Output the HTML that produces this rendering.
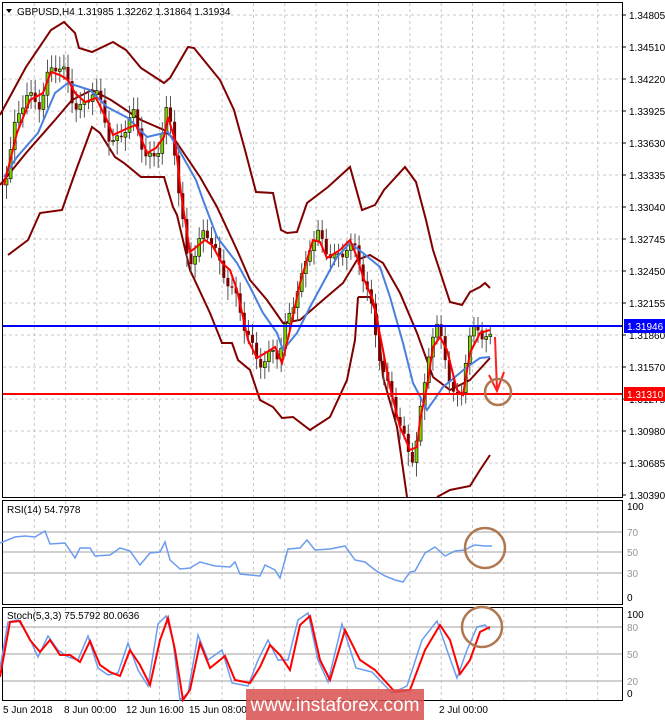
<!DOCTYPE html>
<html><head><meta charset="utf-8"><style>
html,body{margin:0;padding:0;background:#fff;}
body{width:665px;height:720px;overflow:hidden;position:relative;font-family:"Liberation Sans",sans-serif;}
svg{position:absolute;left:0;top:0}
</style></head><body>
<svg id="s" width="665" height="720" viewBox="0 0 665 720" xmlns="http://www.w3.org/2000/svg" font-family="Liberation Sans, sans-serif">
<rect width="665" height="720" fill="#fff"/>
<g id="grid" stroke="#c8c8c8" stroke-dasharray="3,3" stroke-width="1"></g>
<!-- frames -->
<rect x="2.5" y="2.5" width="620" height="495" fill="none" stroke="#000"/>
<rect x="2.5" y="500.5" width="620" height="104" fill="none" stroke="#000"/>
<rect x="2.5" y="607.5" width="620" height="93" fill="none" stroke="#000"/>
<!-- RSI / stoch levels -->
<g stroke="#c0c0c0" stroke-width="1.5">
<line x1="3" y1="532" x2="622" y2="532"/><line x1="3" y1="552" x2="622" y2="552"/><line x1="3" y1="573" x2="622" y2="573"/>
<line x1="3" y1="627" x2="622" y2="627"/><line x1="3" y1="654" x2="622" y2="654"/><line x1="3" y1="681" x2="622" y2="681"/>
</g>
<!-- Bollinger bands -->
<g fill="none" stroke="#800000" stroke-width="2">
<polyline points="0,115 26,67 51,30 64,22 75,33 79,48 92,52 113,42 126,50 141,68 164,83 170,78 188,47 194,48 220,80 234,110 245,150 256,192 273,193 281,230 287,233 297,232 307,203 328,187 350,167 362,210 375,205 384,190 405,167 416,182 426,220 433,250 450,302 462,305 470,292 480,287 485,283 490,288"/>
<polyline points="8,255 28,240 40,213 62,210 75,173 92,127 100,133 115,157 124,163 141,177 164,177 173,207 177,215 190,270 210,313 222,343 232,343 238,360 250,370 260,400 273,407 282,418 293,417 310,430 330,417 347,380 355,340 358,297"/>
<polyline points="358,297 370,297 377,315 383,377 397,427 407,497"/>
<polyline points="437,497 450,490 470,486 480,470 490,455"/>
<polyline points="0,185 26,153 55,120 72,100 92,90 111,100 141,120 164,130 175,140 200,177 217,207 237,250 250,280 267,300 283,323 300,320 323,300 343,283 357,260 370,255 383,263 400,293 417,333 433,377 450,390 470,380 490,358"/>
</g>
<g id="candles"></g>
<polyline fill="none" stroke="#4a7fe0" stroke-width="2" points="4,177 17,157 38,133 55,93 68,83 90,90 107,107 128,118 147,137 168,132 179,150 196,180 203,200 217,237 237,263 250,287 263,313 277,333 283,350 297,333 310,307 323,283 337,257 350,243 363,253 380,267 390,297 403,343 413,383 427,410 443,387 467,367 480,358 490,357"/>
<polyline id="ma" fill="none" stroke="#ff0000" stroke-width="2" points="4,185 17,133 30,100 43,93 51,72 60,75 68,80 75,93 85,102 96,98 107,120 113,135 128,128 136,125 147,153 156,148 164,137 168,117 175,140 181,193 190,252 205,240 212,245 222,263 230,270 237,290 243,317 248,340 257,358 267,352 275,347 282,363 290,330 300,283 313,240 320,242 327,258 340,250 350,240 357,257 363,277 373,300 383,350 390,387 400,427 410,450 417,447 420,420 427,387 433,347 440,337 447,350 457,390 463,395 470,353 480,333 490,330"/>
<!-- levels -->
<line x1="3" y1="326" x2="622" y2="326" stroke="#0000ff" stroke-width="2"/>
<line x1="3" y1="394" x2="622" y2="394" stroke="#ff0000" stroke-width="2"/>
<!-- annotations -->
<path d="M495,337 L497,390 M489,375 L497,391 L504,372" fill="none" stroke="#ff2020" stroke-width="2"/>
<circle cx="498" cy="392" r="13" fill="none" stroke="#b07850" stroke-width="2.5"/>
<!-- RSI -->
<polyline fill="none" stroke="#6a9cf0" stroke-width="1.5" points="0,543 15,537 25,536 35,537 45,531 50,544 65,543 75,558 80,548 90,548 95,556 110,555 120,548 130,551 140,565 150,553 160,552 165,542 170,560 180,569 190,568 200,562 215,566 230,567 235,562 240,574 260,576 265,565 275,570 280,578 288,549 300,548 307,540 315,550 330,549 345,546 355,560 365,562 375,570 385,576 395,580 403,582 410,572 415,571 425,553 435,547 445,556 455,551 465,550 470,547 475,545 485,546 492,546"/>
<circle cx="485" cy="548" r="20" fill="none" stroke="#b07850" stroke-width="2.5"/>
<!-- Stoch -->
<polyline fill="none" stroke="#6a9cf0" stroke-width="1.5" points="0,668 8,622 18,620 28,635 38,657 48,636 58,650 68,657 78,660 88,636 98,668 108,675 118,673 128,643 138,670 148,686 158,624 166,616 173,640 180,700 188,693 198,635 208,660 222,650 232,683 248,686 258,660 268,640 278,660 288,660 298,620 308,613 318,660 328,682 342,624 356,668 372,672 392,693 407,686 422,640 437,621 447,650 457,678 467,650 477,627 485,625 490,630"/>
<polyline fill="none" stroke="#ff0000" stroke-width="2" points="0,677 10,622 20,621 30,640 40,652 50,640 60,655 70,655 80,662 90,641 100,665 110,672 120,676 130,650 140,665 150,685 160,640 168,618 175,650 183,700 190,690 200,643 210,668 225,656 235,680 250,683 260,667 270,645 280,655 290,670 300,625 310,616 320,660 330,680 345,630 360,660 375,670 395,692 410,690 425,650 440,625 450,640 460,674 470,660 480,632 490,627"/>
<circle cx="482" cy="627" r="20" fill="none" stroke="#b07850" stroke-width="2.5"/>
<!-- header -->
<path d="M6,9 L12,9 L9,13 Z" fill="#000"/>
<text x="17" y="15" font-size="10" fill="#000">GBPUSD,H4  1.31985 1.32262 1.31864 1.31934</text>
<text x="7" y="513" font-size="10" fill="#000">RSI(14) 54.7978</text>
<text x="7" y="619" font-size="10" fill="#000">Stoch(5,3,3) 75.5792 80.0636</text>
<!-- axis labels -->
<g id="ax" font-size="10" fill="#000"></g>
<rect x="624" y="319" width="41" height="14" fill="#0000ff"/>
<text x="627" y="330" font-size="10" fill="#fff">1.31946</text>
<rect x="624" y="387" width="41" height="14" fill="#ff0000"/>
<text x="627" y="398" font-size="10" fill="#fff">1.31310</text>
<g font-size="10" fill="#000">
<text x="627" y="510">100</text><text x="627" y="536" fill="#999">70</text><text x="627" y="556" fill="#999">50</text><text x="627" y="577" fill="#999">30</text><text x="627" y="601">0</text>
<text x="627" y="618">100</text><text x="627" y="631" fill="#999">80</text><text x="627" y="658" fill="#999">50</text><text x="627" y="685" fill="#999">20</text><text x="627" y="697">0</text>
<text x="3" y="713">5 Jun 2018</text><text x="64" y="713">8 Jun 00:00</text><text x="126" y="713">12 Jun 16:00</text><text x="189" y="713">15 Jun 08:00</text><text x="439" y="713">2 Jul 00:00</text>
</g>
<!-- watermark -->
<rect x="246" y="689" width="178" height="31" fill="#d85050" opacity="0.85"/>
<text x="335" y="711" font-size="19" fill="#fff" text-anchor="middle">www.instaforex.com</text>
</svg>
<script>
(function(){
var NS="http://www.w3.org/2000/svg";
var g=document.getElementById("grid");
function L(x1,y1,x2,y2){var l=document.createElementNS(NS,"line");l.setAttribute("x1",x1);l.setAttribute("y1",y1);l.setAttribute("x2",x2);l.setAttribute("y2",y2);g.appendChild(l);}
for(var k=1;k<20;k++){var x=3+31.3*k;if(x<620){L(x,3,x,497);L(x,501,x,604);L(x,608,x,700);}}
var labels=["1.34805","1.34510","1.34220","1.33925","1.33630","1.33335","1.33040","1.32745","1.32450","1.32155","1.31860","1.31570","1.31275","1.30980","1.30685","1.30390"];
var ax=document.getElementById("ax");
for(var i=0;i<16;i++){var y=15+32*i;if(i<15)L(3,y,622,y);
 var t=document.createElementNS(NS,"text");t.setAttribute("x",629);t.setAttribute("y",y+4);t.textContent=labels[i];ax.appendChild(t);
 var tk=document.createElementNS(NS,"line");tk.setAttribute("x1",622);tk.setAttribute("x2",626);tk.setAttribute("y1",y);tk.setAttribute("y2",y);tk.setAttribute("stroke","#000");ax.appendChild(tk);}
// candles
var pts=document.getElementById("ma").getAttribute("points").trim().split(/\s+/).map(function(p){return p.split(",").map(Number);});
function maY(x){for(var i=1;i<pts.length;i++){if(x<=pts[i][0]){var a=pts[i-1],b=pts[i];return a[1]+(b[1]-a[1])*(x-a[0])/(b[0]-a[0]);}}return pts[pts.length-1][1];}
var cg=document.getElementById("candles");var prev=maY(4);
for(var x=5;x<=489;x+=4.1){
 var c=maY(x+4)+Math.sin(x*1.7)*10+Math.sin(x*0.37)*6;
 var o=prev;var top=Math.min(o,c),bot=Math.max(o,c);
 var wt=top-4-Math.abs(Math.sin(x*2.3))*10,wb=bot+4+Math.abs(Math.cos(x*1.9))*10;
 var w=document.createElementNS(NS,"line");w.setAttribute("x1",x+1.5);w.setAttribute("x2",x+1.5);w.setAttribute("y1",wt);w.setAttribute("y2",wb);w.setAttribute("stroke","#555");cg.appendChild(w);
 var r=document.createElementNS(NS,"rect");r.setAttribute("x",x);r.setAttribute("y",top);r.setAttribute("width",3);r.setAttribute("height",Math.max(1,bot-top));
 if(c<o){r.setAttribute("fill","#7fd000");r.setAttribute("stroke","#000");r.setAttribute("stroke-width","0.6");}else{r.setAttribute("fill","#7a0000");}
 cg.appendChild(r);prev=c;}
})();
</script>
</body></html>
